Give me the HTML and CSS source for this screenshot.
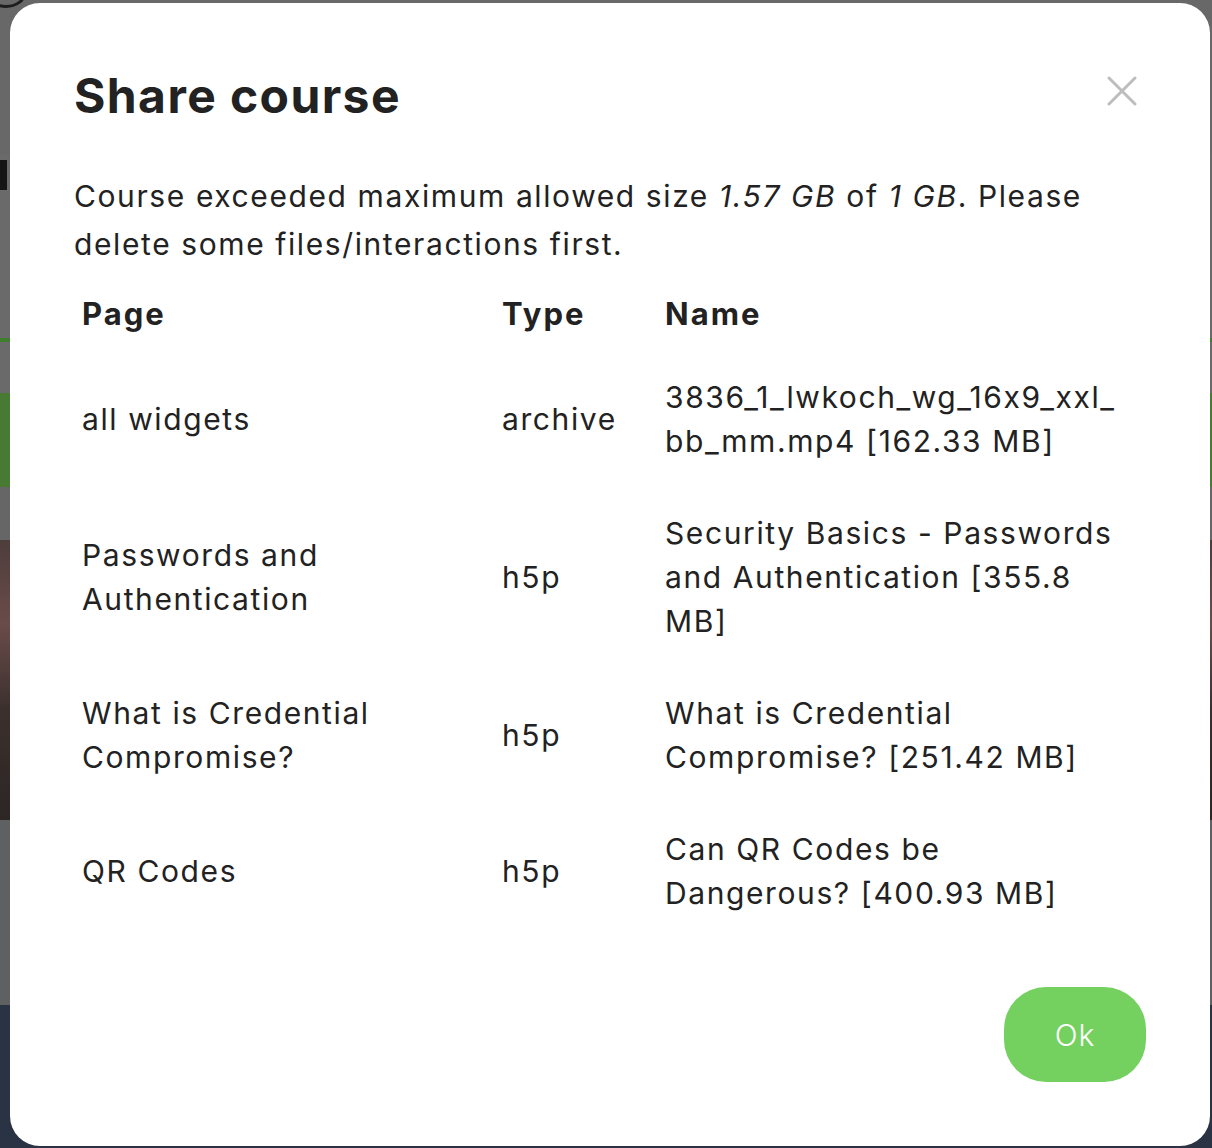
FILE: index.html
```html
<!DOCTYPE html>
<html lang="en">
<head>
<meta charset="utf-8">
<title>Share course</title>
<link rel="stylesheet" href="styles.css">
</head>
<body>
<div class="backdrop">
  <div class="bg-top"><span class="bg-logo"></span><span class="bg-letter"></span></div>
  <div class="bg-gray"></div>
  <div class="bg-line"></div>
  <div class="bg-gray2"></div>
  <div class="bg-green"></div>
  <div class="bg-gray3"></div>
  <div class="bg-photo"></div>
  <div class="bg-gray4"></div>
  <div class="bg-navy"></div>
</div>

<div class="modal" role="dialog" aria-labelledby="modal-title">
  <div class="modal-header">
    <h1 id="modal-title" class="modal-title">Share course</h1>
    <button class="close-btn" aria-label="Close">
      <svg width="30" height="30" viewBox="0 0 30 30" aria-hidden="true">
        <path d="M2 2 L28 28 M28 2 L2 28" stroke="#bdbdbd" stroke-width="3" stroke-linecap="round" fill="none"/>
      </svg>
    </button>
  </div>
  <p class="message">Course exceeded maximum allowed size <em>1.57 GB</em> of <em>1 GB</em>. Please delete some files/interactions first.</p>
  <table class="files">
    <colgroup>
      <col class="col-page">
      <col class="col-type">
      <col class="col-name">
    </colgroup>
    <thead>
      <tr><th>Page</th><th>Type</th><th>Name</th></tr>
    </thead>
    <tbody>
      <tr><td>all widgets</td><td>archive</td><td>3836_1_lwkoch_wg_16x9_xxl_<wbr>bb_mm.mp4 [162.33 MB]</td></tr>
      <tr><td>Passwords and Authentication</td><td>h5p</td><td>Security Basics - Passwords and Authentication [355.8 MB]</td></tr>
      <tr><td>What is Credential Compromise?</td><td>h5p</td><td>What is Credential Compromise? [251.42 MB]</td></tr>
      <tr><td>QR Codes</td><td>h5p</td><td>Can QR Codes be Dangerous? [400.93 MB]</td></tr>
    </tbody>
  </table>
  <div class="modal-footer">
    <button class="ok-btn">Ok</button>
  </div>
</div>
</body>
</html>
```

FILE: styles.css
```css
* { box-sizing: border-box; }

html, body {
  margin: 0;
  padding: 0;
  width: 1212px;
  height: 1148px;
  overflow: hidden;
}

body {
  font-family: Inter, "Noto Sans", sans-serif;
  font-feature-settings: "calt" 0;
  color: #222;
  position: relative;
}

/* dimmed page behind the dialog */
.backdrop {
  display: flex;
  flex-direction: column;
  height: 1148px;
  background: #666;
}
.bg-top { height: 155px; background: #686868; position: relative; }
.bg-logo {
  position: absolute;
  left: -14px;
  top: -22px;
  width: 40px;
  height: 30px;
  border: 3px solid #1e1e1e;
  border-radius: 50%;
}
.bg-letter {
  position: absolute;
  left: 0;
  top: 160px;
  width: 7px;
  height: 30px;
  background: #151515;
}
.bg-gray { height: 183px; background: #6a6a6a; }
.bg-line { height: 4px; background: #3e7d2c; }
.bg-gray2 { height: 51px; background: #6a6a6a; }
.bg-green { height: 94px; background: #487a34; }
.bg-gray3 { height: 53px; background: #666; }
.bg-photo { height: 280px; background: linear-gradient(180deg, #4d3d3b 0%, #6a4c4a 30%, #3c302e 60%, #2c2624 100%); }
.bg-gray4 { height: 185px; background: #5f6061; }
.bg-navy { flex: 1; background: #2a3344; }

/* dialog */
.modal {
  position: absolute;
  top: 3px;
  left: 10px;
  width: 1200px;
  height: 1143px;
  background: #fff;
  border-radius: 30px;
  padding: 64px;
  display: flex;
  flex-direction: column;
}

.modal-header {
  display: flex;
  justify-content: space-between;
  align-items: flex-start;
}

.modal-title {
  margin: 0;
  font-size: 48px;
  line-height: 58px;
  font-weight: 700;
  color: #222;
  letter-spacing: 1.4px;
}

.close-btn {
  width: 48px;
  height: 48px;
  border: 0;
  background: transparent;
  padding: 0;
  display: flex;
  align-items: center;
  justify-content: center;
  cursor: pointer;
}

.message {
  margin: 47px 0 0;
  font-size: 30px;
  line-height: 48px;
  font-weight: 400;
  letter-spacing: 1.6px;
  color: #222;
}
.message em { font-style: italic; }

.files {
  width: 1072px;
  border-collapse: collapse;
  table-layout: fixed;
  font-size: 30px;
  line-height: 44px;
  letter-spacing: 1.6px;
  color: #222;
}
.col-page { width: 420px; }
.col-type { width: 163px; }
.col-name { width: 489px; }

.files th {
  text-align: left;
  font-size: 31px;
  font-weight: 700;
  letter-spacing: 2px;
  padding: 24px 8px 15px;
}
.files td {
  vertical-align: middle;
  padding: 24px 8px;
  font-weight: 400;
}
.files td:last-child,
.files th:last-child { padding-right: 19px; }

.modal-footer {
  margin-top: auto;
  display: flex;
  justify-content: flex-end;
}

.ok-btn {
  width: 142px;
  height: 95px;
  border: 0;
  border-radius: 42px;
  background: #74d160;
  color: #fff;
  font-family: Inter, "Noto Sans", sans-serif;
  font-size: 30px;
  font-weight: 300;
  letter-spacing: 1px;
  cursor: pointer;
}
```
